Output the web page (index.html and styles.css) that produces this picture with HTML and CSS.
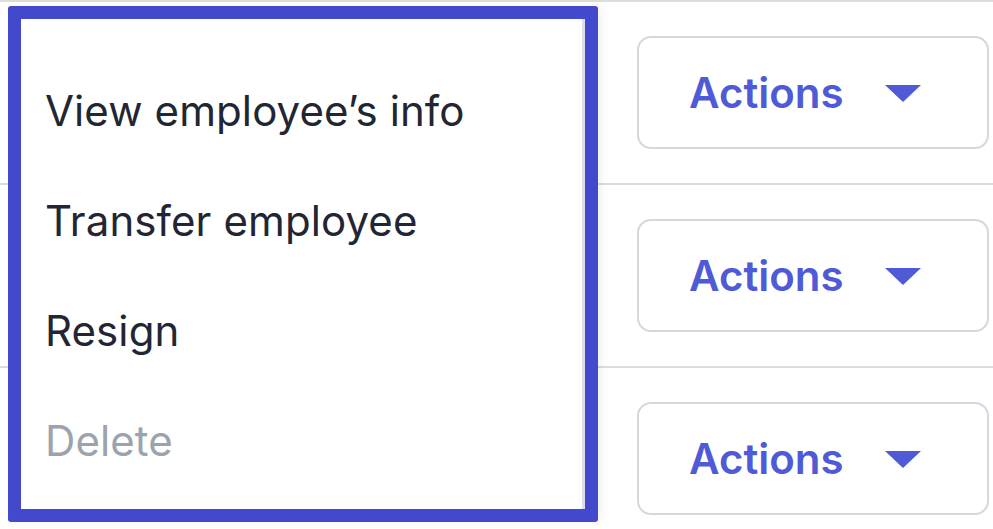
FILE: index.html
```html
<!DOCTYPE html>
<html lang="en">
<head>
<meta charset="utf-8">
<title>Employees</title>
<link rel="stylesheet" href="styles.css">
</head>
<body>
<div class="table">
  <div class="row">
    <div class="cell-main"></div>
    <div class="cell-action">
      <button class="actions-btn"><span>Actions</span><svg class="caret" viewBox="0 0 36 17" width="36" height="17"><path d="M0 0H36L18 17Z"/></svg></button>
    </div>
  </div>
  <div class="row">
    <div class="cell-main"></div>
    <div class="cell-action">
      <button class="actions-btn"><span>Actions</span><svg class="caret" viewBox="0 0 36 17" width="36" height="17"><path d="M0 0H36L18 17Z"/></svg></button>
    </div>
  </div>
  <div class="row">
    <div class="cell-main"></div>
    <div class="cell-action">
      <button class="actions-btn"><span>Actions</span><svg class="caret" viewBox="0 0 36 17" width="36" height="17"><path d="M0 0H36L18 17Z"/></svg></button>
    </div>
  </div>
</div>
<ul class="menu">
  <li class="menu-item">View employee’s info</li>
  <li class="menu-item">Transfer employee</li>
  <li class="menu-item">Resign</li>
  <li class="menu-item disabled">Delete</li>
</ul>
</body>
</html>
```
FILE: styles.css
```css
* { box-sizing: border-box; }
html, body {
  margin: 0;
  padding: 0;
  background: #ffffff;
  font-family: Inter, "Liberation Sans", sans-serif;
}
body {
  position: relative;
  width: 993px;
  height: 529px;
  overflow: hidden;
}
.table {
  display: flex;
  flex-direction: column;
}
.row {
  display: flex;
  height: 183px;
  border-top: 2px solid #dcdcdc;
}
.cell-main {
  flex: 1;
}
.cell-action {
  width: 360px;
  display: flex;
  align-items: center;
  padding-left: 4px;
}
.actions-btn {
  width: 352px;
  height: 113px;
  border: 2px solid #d3d8df;
  border-radius: 14px;
  background: #ffffff;
  display: flex;
  align-items: center;
  padding: 0 0 0 50px;
  gap: 41px;
  font-family: Inter, "Liberation Sans", sans-serif;
  font-size: 42px;
  font-weight: 600;
  color: #4f5ad6;
}
.caret {
  fill: #4f5ad6;
  margin-top: 2px;
}
.menu {
  position: absolute;
  left: 8px;
  top: 6px;
  width: 590px;
  height: 516px;
  margin: 0;
  padding: 37px 0 0 24px;
  list-style: none;
  background: #ffffff;
  border: 13px solid #4249cd;
  border-radius: 3px;
  box-shadow: inset -3px 0 0 #dcdeea, 4px 0 10px rgba(0,0,0,0.05);
}
.menu-item {
  height: 110px;
  line-height: 110px;
  font-size: 42px;
  letter-spacing: 0.1px;
  color: #222633;
  white-space: nowrap;
}
.menu-item.disabled {
  color: #9ca3af;
}
```
